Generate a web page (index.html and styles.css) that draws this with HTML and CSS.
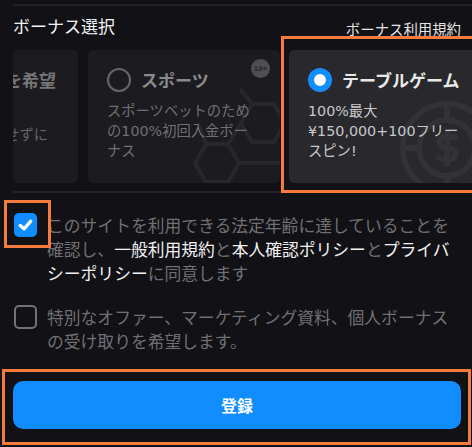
FILE: index.html
```html
<!DOCTYPE html>
<html lang="ja">
<head>
  <meta charset="UTF-8" />
  <title>登録</title>
  <link rel="stylesheet" href="styles.css">
</head>
<body>
  <!-- Bonus picker -->
  <section class="bonus">
    <div class="bonus-head">
      <h2>ボーナス選択</h2>
      <a class="terms">ボーナス利用規約</a>
    </div>
    <div class="slider">
      <div class="card card-none">
        <div class="card-title">ボーナスを希望</div>
        <p>せずに</p>
      </div>
      <div class="card card-dim">
        <span class="badge">18+</span>
        <div class="card-head">
          <span class="radio"></span>
          <span class="card-title">スポーツ</span>
        </div>
        <p>スポーツベットのための100%初回入金ボーナス</p>
        <svg class="mark mark-ball" viewBox="0 0 120 110" fill="none" stroke="#27272d" stroke-width="4" stroke-linejoin="round">
          <path d="M35 90l11-19h22l11 19-11 19H46z"/>
          <path d="M81 50l11-19h22l11 19-11 19H92z"/>
          <path d="M68 71l13-21M79 90h41M46 71L38 50M92 31L80 16"/>
        </svg>
      </div>
      <div class="card card-active">
        <div class="card-head">
          <span class="radio radio-on"></span>
          <span class="card-title">テーブルゲーム</span>
        </div>
        <p>100%最大<br>¥150,000+100フリー<br>スピン!</p>
        <svg class="mark mark-chip" viewBox="0 0 100 100" fill="none" stroke="#323237" stroke-width="6">
          <circle cx="50" cy="50" r="46"/>
          <circle cx="50" cy="50" r="29"/>
          <path d="M50 4v17M50 79v17M4 50h17M79 50h17"/>
          <path d="M60 41c-2-4-16-5-18 2-2 9 18 5 17 14-1 7-16 6-19 1M50 31v38"/>
        </svg>
      </div>
    </div>
  </section>

  <!-- Agreements -->
  <label class="check">
    <span class="box box-on">
      <svg viewBox="0 0 24 24" fill="none" stroke="#fff" stroke-width="3.4" stroke-linecap="round" stroke-linejoin="round"><path d="M6.5 12.5l4 3.5 7-8"/></svg>
    </span>
    <span>このサイトを利用できる法定年齢に達していることを確認し、<b>一般利用規約</b>と<b>本人確認ポリシー</b>と<b>プライバシーポリシー</b>に同意します</span>
  </label>
  <label class="check check-offers">
    <span class="box"></span>
    <span>特別なオファー、マーケティング資料、個人ボーナスの受け取りを希望します。</span>
  </label>

  <div class="submit-row">
    <button class="submit">登録</button>
  </div>

  <!-- Orange annotation frames -->
  <div class="frame frame-card"></div>
  <div class="frame frame-check"></div>
  <div class="frame frame-submit"></div>
</body>
</html>
```

FILE: styles.css
```css
:root {
  --bg: #111116;
  --line: #222228;
  --accent: #118dff;
  --muted: #707074;
  --frame: #f57c3c;
}

html, body {
  height: 447px;
  overflow: hidden;
}

body {
  position: relative;
  margin: 0;
  background: var(--bg);
  color: var(--muted);
  font-family: "Noto Sans CJK JP", "Noto Sans", sans-serif;
}

.bonus {
  margin: 4px 0 0 13px;
  padding-bottom: 10px;
  position: relative;
  border-top: 2px solid var(--line);
}

.bonus::after {
  content: "";
  position: absolute;
  left: 0;
  right: 11px;
  bottom: 0;
  height: 2px;
  background: var(--line);
}

.bonus-head {
  display: flex;
  justify-content: space-between;
  align-items: center;
  height: 34px;
  margin: 0 11px 10px 0;
}

.bonus-head h2 {
  margin: 0;
  color: #f2f2f2;
  font-size: 17px;
  font-weight: 400;
  line-height: 24px;
  position: relative;
  top: 3px;
}

.terms {
  color: #e4e4e4;
  font-size: 14.4px;
  line-height: 20px;
  position: relative;
  top: 6px;
}

.slider {
  display: flex;
  gap: 10px;
  height: 133px;
  overflow: hidden;
}

.card {
  position: relative;
  flex: 0 0 192px;
  box-sizing: border-box;
  padding: 18px 19px 0;
  border-radius: 5px;
  overflow: hidden;
  background: #1b1b20;
}

.card p {
  position: relative;
  z-index: 1;
  margin: 9px 0 0;
  font-family: "DejaVu Sans", "Noto Sans CJK JP", sans-serif;
  font-size: 14.3px;
  line-height: 20px;
}

.card-title {
  font-size: 17px;
  font-weight: 700;
  line-height: 24px;
  white-space: nowrap;
}

.card-head {
  display: flex;
  align-items: center;
  gap: 10px;
  position: relative;
  z-index: 1;
}

.card-none {
  flex-basis: 65px;
  padding: 18px 22px 0 0;
  white-space: nowrap;
  direction: rtl;
  color: #66666a;
}

.card-none .card-title {
  color: #77777a;
}

.card-none p {
  margin-top: 33px;
  padding-right: 8px;
}

.card-dim .card-title {
  color: #8b8b8e;
}

.card-active {
  flex-basis: 200px;
  margin-left: -1px;
  background: #28282d;
}

.card-active p {
  color: #c8c8ca;
}

.card-active .card-title {
  color: #e8e8e8;
}

.radio {
  flex: none;
  box-sizing: border-box;
  width: 24px;
  height: 24px;
  border: 2px solid #66666a;
  border-radius: 50%;
}

.radio-on {
  border: 6px solid var(--accent);
  background: #fff;
}

.badge {
  position: absolute;
  top: 9px;
  right: 10px;
  width: 19px;
  height: 19px;
  border-radius: 50%;
  background: #4e4e53;
  color: #2a2a2e;
  font: 700 8px/19px "Liberation Sans", sans-serif;
  text-align: center;
}

.mark {
  position: absolute;
}

.mark-ball {
  width: 120px;
  height: 110px;
  right: 0;
  bottom: 0;
}

.mark-chip {
  width: 96px;
  height: 96px;
  left: 110px;
  top: 50px;
}

.check {
  display: flex;
  gap: 10px;
  margin: 20px 21px 0 14px;
  font-size: 16.8px;
  line-height: 24px;
}

.check b {
  color: #f2f2f2;
  font-weight: 400;
}

.box {
  flex: none;
  box-sizing: border-box;
  width: 23px;
  height: 24px;
  border: 2px solid #737377;
  border-radius: 5px;
}

.box svg {
  display: block;
  width: 100%;
  height: 100%;
}

.box-on {
  border: 0;
  background: var(--accent);
}

.submit-row {
  padding: 28px 11px 0 13px;
}

.submit {
  display: block;
  width: 100%;
  height: 48px;
  border: none;
  border-radius: 10px;
  background: var(--accent);
  color: #fff;
  font-family: inherit;
  font-size: 16px;
  font-weight: 700;
}

.frame {
  position: absolute;
  box-sizing: border-box;
  border: 3px solid var(--frame);
  pointer-events: none;
}

.frame-card {
  left: 281px;
  top: 36px;
  width: 191px;
  height: 157px;
  border-right: 0;
}

.frame-check {
  left: 4px;
  top: 200px;
  width: 47px;
  height: 48px;
}

.frame-submit {
  left: 2px;
  top: 369px;
  width: 469px;
  height: 76px;
}
```
